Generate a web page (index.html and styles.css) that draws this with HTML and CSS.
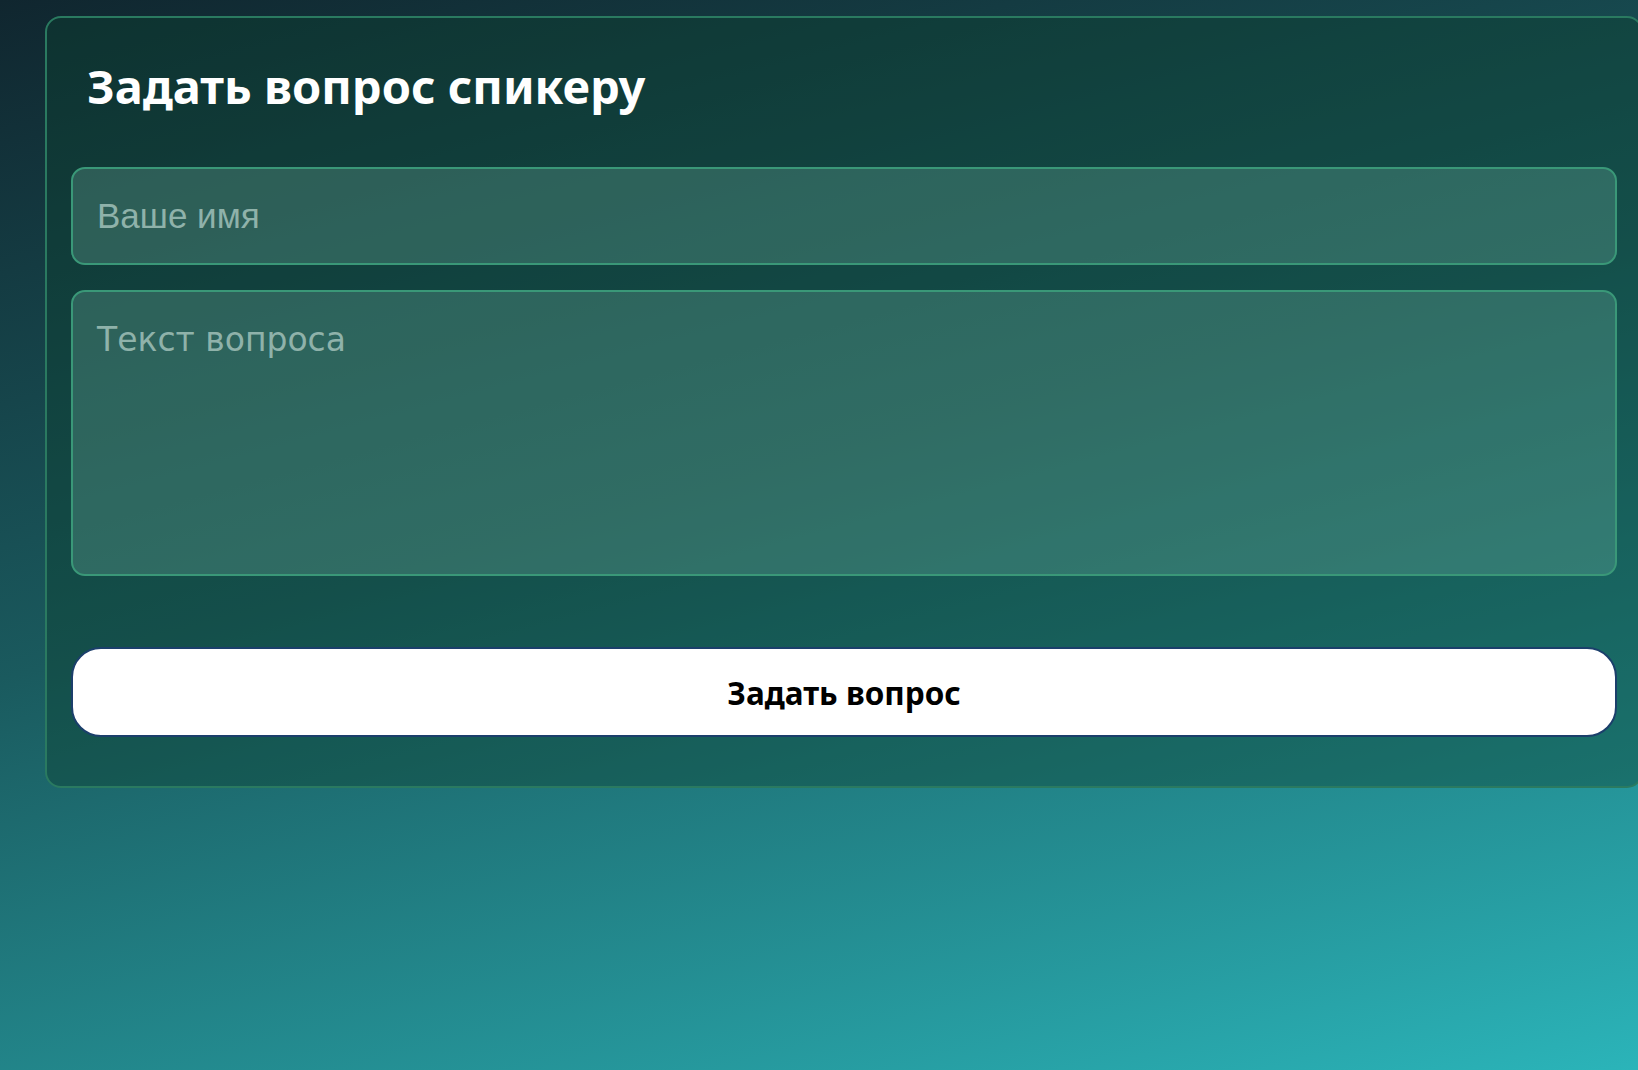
FILE: index.html
```html
<!DOCTYPE html>
<html lang="ru">
<head>
<meta charset="utf-8">
<title>Задать вопрос спикеру</title>
<link rel="stylesheet" href="styles.css">
</head>
<body>
<main class="page">
  <section class="card">
    <h1 class="card-title">Задать вопрос спикеру</h1>
    <form class="ask-form">
      <input class="field field-name" type="text" placeholder="Ваше имя">
      <textarea class="field field-text" placeholder="Текст вопроса"></textarea>
      <button class="submit" type="button">Задать вопрос</button>
    </form>
  </section>
</main>
</body>
</html>
```

FILE: styles.css
```css
html, body {
  margin: 0;
  padding: 0;
  height: 100%;
}

body {
  overflow: hidden;
  background: linear-gradient(165deg, #10262f 0%, #1a5a5e 45%, #2bb4b9 100%);
  font-family: "Noto Sans", "Open Sans", sans-serif;
}

.page {
  padding: 16px 0 0 45px;
}

.card {
  box-sizing: border-box;
  width: 1598px;
  border: 2px solid #2a7a60;
  border-radius: 16px;
  background: rgba(12, 64, 48, 0.42);
  padding: 0 24px 49px 24px;
}

.card-title {
  margin: 0;
  padding: 40px 16px 0 16px;
  height: 149px;
  box-sizing: border-box;
  color: #ffffff;
  font-family: "Noto Sans", sans-serif;
  font-weight: 700;
  font-size: 47px;
  line-height: 1.2;
}

.ask-form {
  display: flex;
  flex-direction: column;
}

.field {
  box-sizing: border-box;
  width: 100%;
  border: 2px solid #3a9878;
  border-radius: 14px;
  background: rgba(130, 200, 180, 0.25);
  color: #ffffff;
  font-family: "Liberation Sans", Arial, sans-serif;
  font-size: 35px;
  padding: 0 24px;
  outline: none;
}

.field::placeholder {
  color: #8fb2aa;
  opacity: 1;
}

.field-name {
  height: 98px;
}

.field-text {
  margin-top: 25px;
  height: 286px;
  padding-top: 28px;
  resize: none;
  font-family: "DejaVu Sans", "Liberation Sans", sans-serif;
  font-size: 33px;
}

.submit {
  margin-top: 71px;
  height: 90px;
  width: 100%;
  border: 2px solid #1b3f6b;
  border-radius: 30px;
  background: #ffffff;
  color: #000000;
  font-family: "Noto Sans", sans-serif;
  font-weight: 700;
  font-size: 31.5px;
  cursor: pointer;
}
```
